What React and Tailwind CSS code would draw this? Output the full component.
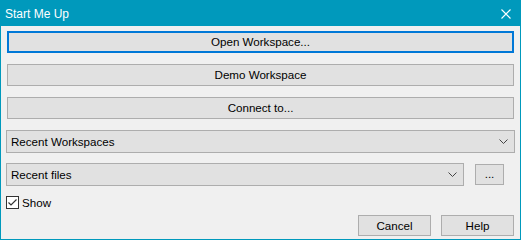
import React from "react";

function Chevron() {
  return (
    <svg width="9" height="5" viewBox="0 0 9 5" className="block">
      <path d="M0.5 0.5 L4.5 4.5 L8.5 0.5" fill="none" stroke="#444" strokeWidth="1" />
    </svg>
  );
}

function Btn({ children, focused, className = "" }) {
  return (
    <div
      className={
        "h-[22px] flex items-center justify-center bg-[#e1e1e1] text-black " +
        (focused ? "border-2 border-[#0078d7] " : "border border-[#adadad] ") +
        className
      }
    >
      {children}
    </div>
  );
}

function Combo({ label, className = "" }) {
  return (
    <div
      className={
        "h-[23px] flex items-center justify-between bg-[#e1e1e1] border border-[#adadad] pl-[4px] pr-[6px] text-black " +
        className
      }
    >
      <span>{label}</span>
      <Chevron />
    </div>
  );
}

export default function App() {
  return (
    <div className="w-[521px] h-[240px] border border-[#0099bc] bg-[#f0f0f0] flex flex-col font-['Segoe_UI','Liberation_Sans',sans-serif] text-[11.6px] leading-none overflow-hidden">
      <div className="h-[25px] bg-[#0099bc] flex items-center justify-between pl-[4px] pr-[9px] text-white text-[12px]">
        <span>Start Me Up</span>
        <svg width="10" height="10" viewBox="0 0 10 10" className="block">
          <path d="M0.5 0.5 L9.5 9.5 M9.5 0.5 L0.5 9.5" stroke="#fff" strokeWidth="1.1" />
        </svg>
      </div>
      <div className="flex flex-col px-[6px] pt-[5px]">
        <Btn focused>Open Workspace...</Btn>
        <Btn className="mt-[11px]">Demo Workspace</Btn>
        <Btn className="mt-[11px]">Connect to...</Btn>
        <Combo label="Recent Workspaces" className="mt-[11px] -mx-px" />
        <div className="flex items-center mt-[10px] -ml-px gap-[11px] pr-[10px]">
          <Combo label="Recent files" className="flex-1" />
          <div className="h-[21px] w-[29px] flex items-center justify-center bg-[#e1e1e1] border border-[#adadad] pb-[2px]">
            ...
          </div>
        </div>
        <div className="flex items-center mt-[10px] -ml-px gap-[3px]">
          <div className="w-[13px] h-[13px] border border-[#333] bg-white flex items-center justify-center">
            <svg width="11" height="11" viewBox="0 0 11 11" className="block">
              <path d="M1.5 5.5 L4 8 L9.5 2.5" fill="none" stroke="#333" strokeWidth="1.2" />
            </svg>
          </div>
          <span>Show</span>
        </div>
        <div className="flex justify-end gap-[10px] mt-[6px]">
          <div className="w-[73px] h-[21px] flex items-center justify-center bg-[#e1e1e1] border border-[#adadad]">Cancel</div>
          <div className="w-[73px] h-[21px] flex items-center justify-center bg-[#e1e1e1] border border-[#adadad]">Help</div>
        </div>
      </div>
    </div>
  );
}
